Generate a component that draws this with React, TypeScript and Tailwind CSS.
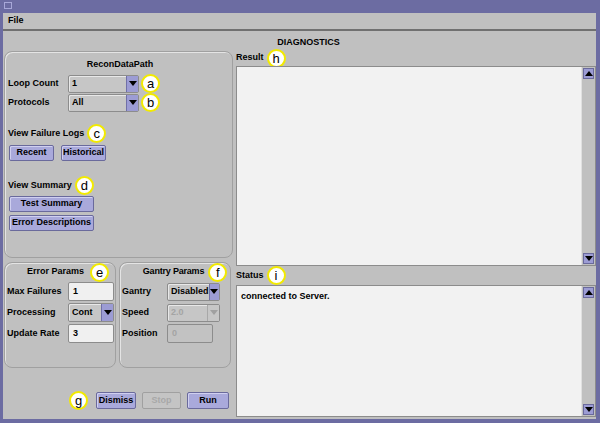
import React from "react";

const font = { fontFamily: '"Liberation Sans", Arial, sans-serif' };

const Mark = ({ letter }: { letter: string }) => (
  <span className="inline-flex items-center justify-center w-[19px] h-[19px] shrink-0 rounded-full bg-white border-[2px] border-[#f2ea00] text-[13px] font-normal leading-none text-black">
    {letter}
  </span>
);

const Arrow = ({ disabled, up }: { disabled?: boolean; up?: boolean }) => (
  <svg width="8" height="5" viewBox="0 0 8 5">
    <path d={up ? "M0 5 L4 0 L8 5 Z" : "M0 0 L8 0 L4 5 Z"} fill={disabled ? "#a0a0a0" : "#000"} />
  </svg>
);

const Combo = ({ value, w, disabled }: { value: string; w: string; disabled?: boolean }) => (
  <div className={`${w} h-[18px] flex border border-[#8c8c8c] rounded-[2px] bg-[#c6c6c6] shadow-[inset_1px_1px_0_#e8e8e8]`}>
    <div className={`flex-1 flex items-center pl-[3px] ${disabled ? "text-[#a4a4a4]" : "text-black"}`}>{value}</div>
    <div className={`w-[12px] flex items-center justify-center ${disabled ? "bg-[#c6c6c6] border-l border-[#a8a8a8]" : "bg-[#9c9cd4] border-l border-[#7070a8]"}`}>
      <Arrow disabled={disabled} />
    </div>
  </div>
);

const Field = ({ value, disabled }: { value: string; disabled?: boolean }) => (
  <div className={`w-[46px] h-[19px] flex items-center pl-[4px] border border-[#8c8c8c] rounded-[2px] ${disabled ? "bg-[#c2c2c2] text-[#a4a4a4]" : "bg-[#f0f0f0] text-black"}`}>
    {value}
  </div>
);

const Btn = ({ label, w, disabled }: { label: string; w: string; disabled?: boolean }) => (
  <div className={`${w} h-[16px] flex items-center justify-center rounded-[2px] border whitespace-nowrap ${disabled ? "bg-[#c4c4c4] border-[#a0a0a0] text-[#a8a8a8]" : "bg-[#a9a9db] border-[#6a6a9c] text-black shadow-[inset_1px_1px_0_#d0d0f0]"}`}>
    {label}
  </div>
);

const ScrollBar = () => (
  <div className="w-[14px] flex flex-col justify-between bg-[#c0c0c0] border-l border-[#e0e0e0] py-[1px] pl-[1px]">
    <div className="w-[11px] h-[11px] bg-[#9c9cd4] border border-[#6a6a9c] flex items-center justify-center">
      <Arrow up />
    </div>
    <div className="w-[11px] h-[11px] bg-[#9c9cd4] border border-[#6a6a9c] flex items-center justify-center">
      <Arrow />
    </div>
  </div>
);

const TextArea = ({ className, children }: { className: string; children?: React.ReactNode }) => (
  <div className={`${className} flex border border-[#8c8c8c]`}>
    <div className="flex-1 bg-[#f2f2f2] px-[4px] pt-[4px]">{children}</div>
    <ScrollBar />
  </div>
);

export default function App() {
  return (
    <div className="w-[600px] h-[423px] bg-[#6c6ca2] flex flex-col text-[9px] font-bold text-black overflow-hidden whitespace-nowrap" style={font}>
      <div className="h-[13px] flex items-start pl-[4px] pt-[2px]">
        <div className="w-[8px] h-[7px] border border-[#a8a8d8]" />
      </div>
      <div className="flex-1 ml-[3px] mr-[4px] mb-[4px] bg-[#c0c0c0] flex flex-col">
        <div className="h-[18px] flex items-center pl-[5px] border-b-[2px] border-[#707070]">File</div>
        <div className="h-[20px] flex items-end justify-center pl-[18px] pb-[2px]">DIAGNOSTICS</div>
        <div className="flex-1 flex">
          <div className="w-[230px] flex flex-col pl-[1px]">
            <div className="h-[207px] border border-[#a0a0a0] rounded-[8px] shadow-[inset_1px_1px_0_#e4e4e4] flex flex-col pl-[3px]">
              <div className="h-[20px] flex items-end justify-center pb-[1px]">ReconDataPath</div>
              <div className="flex items-center mt-[2px] h-[19px]">
                <span className="w-[60px]">Loop Count</span>
                <Combo value="1" w="w-[71px]" />
                <span className="ml-[2px]"><Mark letter="a" /></span>
              </div>
              <div className="flex items-center h-[19px]">
                <span className="w-[60px]">Protocols</span>
                <Combo value="All" w="w-[71px]" />
                <span className="ml-[2px]"><Mark letter="b" /></span>
              </div>
              <div className="flex items-center gap-[3px] mt-[12px]">
                <span>View Failure Logs</span>
                <Mark letter="c" />
              </div>
              <div className="flex gap-[7px] mt-[2px] pl-[1px]">
                <Btn label="Recent" w="w-[45px]" />
                <Btn label="Historical" w="w-[45px]" />
              </div>
              <div className="flex items-center gap-[3px] mt-[15px]">
                <span>View Summary</span>
                <Mark letter="d" />
              </div>
              <div className="flex flex-col gap-[3px] mt-[1px] pl-[1px]">
                <Btn label="Test Summary" w="w-[85px]" />
                <Btn label="Error Descriptions" w="w-[85px]" />
              </div>
            </div>
            <div className="flex gap-[3px] mt-[4px] h-[106px]">
              <div className="w-[112px] border border-[#a0a0a0] rounded-[8px] shadow-[inset_1px_1px_0_#e4e4e4] flex flex-col pl-[2px]">
                <div className="h-[18px] flex items-center justify-center pl-[14px] gap-[6px]">
                  <span>Error Params</span>
                  <Mark letter="e" />
                </div>
                <div className="flex items-center h-[21px]">
                  <span className="w-[61px]">Max Failures</span>
                  <Field value="1" />
                </div>
                <div className="flex items-center h-[21px]">
                  <span className="w-[61px]">Processing</span>
                  <Combo value="Cont" w="w-[46px] !h-[19px]" />
                </div>
                <div className="flex items-center h-[21px]">
                  <span className="w-[61px]">Update Rate</span>
                  <Field value="3" />
                </div>
              </div>
              <div className="w-[112px] border border-[#a0a0a0] rounded-[8px] shadow-[inset_1px_1px_0_#e4e4e4] flex flex-col pl-[2px]">
                <div className="h-[18px] flex items-center justify-center pl-[18px] gap-[4px]">
                  <span className="tracking-[-0.2px]">Gantry Params</span>
                  <Mark letter="f" />
                </div>
                <div className="flex items-center h-[21px]">
                  <span className="w-[45px]">Gantry</span>
                  <Combo value="Disabled" w="w-[53px]" />
                </div>
                <div className="flex items-center h-[21px]">
                  <span className="w-[45px]">Speed</span>
                  <Combo value="2.0" w="w-[53px]" disabled />
                </div>
                <div className="flex items-center h-[21px]">
                  <span className="w-[45px]">Position</span>
                  <Field value="0" disabled />
                </div>
              </div>
            </div>
            <div className="flex items-center mt-[23px] pl-[65px]">
              <Mark letter="g" />
              <div className="flex gap-[6px] ml-[8px]">
                <Btn label="Dismiss" w="w-[40px] !h-[17px]" />
                <Btn label="Stop" w="w-[39px] !h-[17px]" disabled />
                <Btn label="Run" w="w-[42px] !h-[17px]" />
              </div>
            </div>
          </div>
          <div className="flex-1 flex flex-col pl-[3px] pb-[2px]">
            <div className="h-[14px] flex items-center gap-[3px]">
              <span>Result</span>
              <Mark letter="h" />
            </div>
            <TextArea className="h-[200px] mt-[1px]" />
            <div className="h-[19px] flex items-center gap-[3px]">
              <span>Status</span>
              <Mark letter="i" />
            </div>
            <TextArea className="flex-1">
              <span>connected to Server.</span>
            </TextArea>
          </div>
        </div>
      </div>
    </div>
  );
}
